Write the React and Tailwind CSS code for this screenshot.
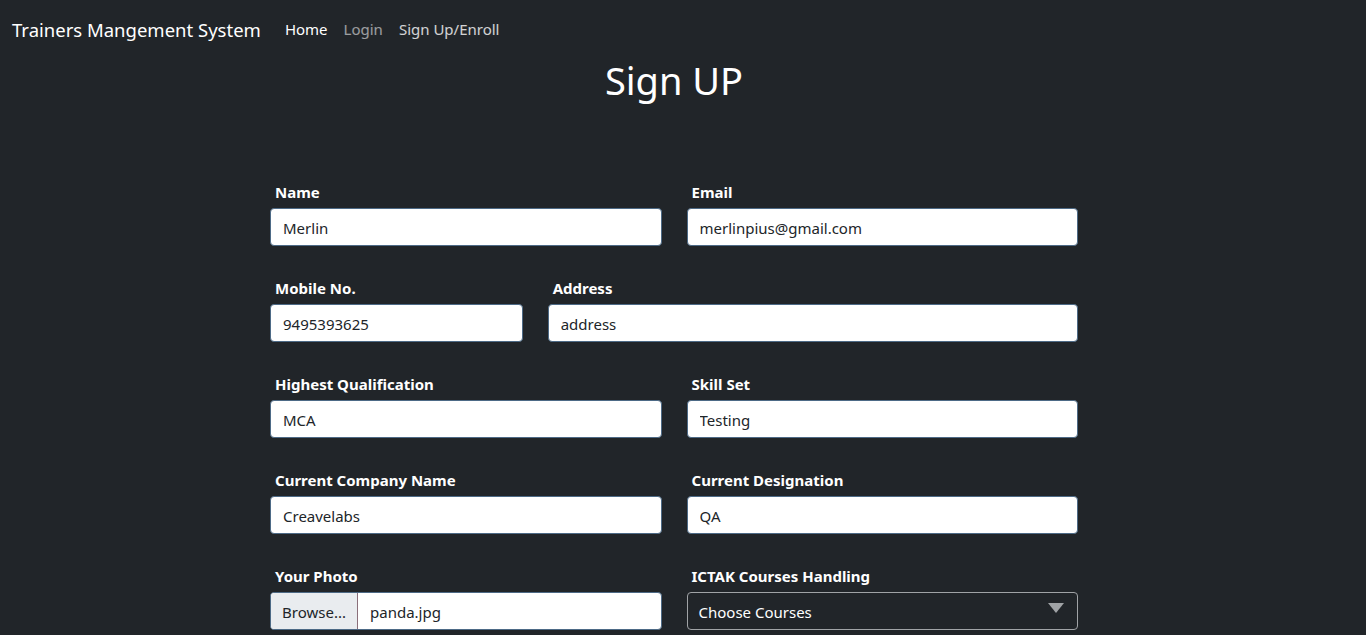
import React from 'react';

const font = { fontFamily: '"Noto Sans", "Open Sans", sans-serif' };

function Field({ label, value, span }) {
    return (
        <div className={`${span} flex flex-col`}>
            <label className="text-[15px] font-bold text-white pl-[5px] h-[24px] leading-[24px] mb-[4px]">{label}</label>
            <input
                readOnly
                value={value}
                className="h-[38px] w-full bg-white rounded-[4px] border border-[#4d6a86] px-[12px] pt-[2px] text-[15px] text-[#212529] outline-none"
                style={font}
            />
        </div>
    );
}

export default function App() {
    return (
        <div className="min-h-screen bg-[#212529] text-white" style={font}>
            {/* Navbar */}
            <nav className="flex items-center h-[60px] px-[12px]">
                <span className="text-[18.5px] text-white mr-[24px]">Trainers Mangement System</span>
                <div className="flex items-center gap-[16px] text-[15px] -mt-[1px]">
                    <a className="text-white">Home</a>
                    <a className="text-white/55">Login</a>
                    <a className="text-white/80">Sign Up/Enroll</a>
                </div>
            </nav>

            <h1 className="text-center text-[38px] leading-[44px] -mt-[2px] pr-[18px]">Sign UP</h1>

            <form className="w-[808px] ml-[270px] mt-[78px] grid grid-cols-12 gap-x-[25px] gap-y-[30px]">
                <Field span="col-span-6" label="Name" value="Merlin" />
                <Field span="col-span-6" label="Email" value="merlinpius@gmail.com" />
                <Field span="col-span-4" label="Mobile No." value="9495393625" />
                <Field span="col-span-8" label="Address" value="address" />
                <Field span="col-span-6" label="Highest Qualification" value="MCA" />
                <Field span="col-span-6" label="Skill Set" value="Testing" />
                <Field span="col-span-6" label="Current Company Name" value="Creavelabs" />
                <Field span="col-span-6" label="Current Designation" value="QA" />

                <div className="col-span-6 flex flex-col">
                    <label className="text-[15px] font-bold text-white pl-[5px] h-[24px] leading-[24px] mb-[4px]">Your Photo</label>
                    <div className="h-[38px] flex bg-white rounded-[4px] border border-[#4d6a86] overflow-hidden text-[15px]">
                        <span className="w-[87px] bg-[#e9ecef] border-r border-[#8a6f7a] text-[#212529] flex items-center justify-center pt-[2px]">Browse...</span>
                        <span className="text-[#212529] flex items-center pl-[12px] pt-[2px]">panda.jpg</span>
                    </div>
                </div>
                <div className="col-span-6 flex flex-col">
                    <label className="text-[15px] font-bold text-white pl-[5px] h-[24px] leading-[24px] mb-[4px]">ICTAK Courses Handling</label>
                    <div className="h-[38px] flex items-center justify-between rounded-[4px] border border-[#a0a3a6] px-[11px] text-[15px] text-white">
                        <span className="pt-[2px]">Choose Courses</span>
                        <svg width="16" height="10" viewBox="0 0 16 10" className="mb-[6px] mr-[2px]">
                            <path d="M0 0 H16 L8 10 Z" fill="#a0a3a6" />
                        </svg>
                    </div>
                </div>
            </form>
        </div>
    );
}
